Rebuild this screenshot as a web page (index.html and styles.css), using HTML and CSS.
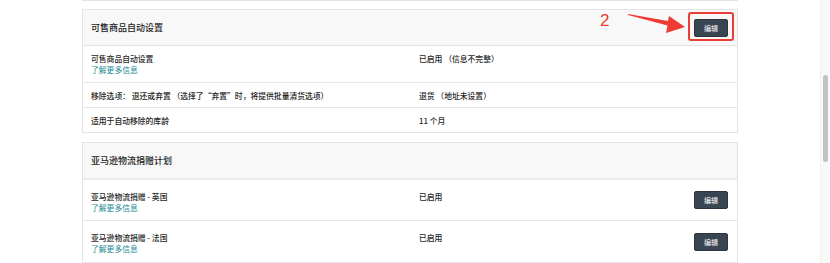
FILE: index.html
```html
<!DOCTYPE html>
<html lang="zh-CN">
<head>
<meta charset="utf-8">
<link rel="stylesheet" href="styles.css">
</head>
<body>
<div class="page">
  <div class="stub"></div>

  <section class="card">
    <div class="card-head">
      <span class="title">可售商品自动设置</span>
      <button class="btn btn-head">编辑</button>
    </div>
    <div class="row row-tall">
      <div class="label"><div>可售商品自动设置</div><a class="link">了解更多信息</a></div>
      <div class="value">已启用 （信息不完整）</div>
    </div>
    <div class="row">
      <div class="label">移除选项： 退还或弃置 （选择了“弃置”时，将提供批量清货选项）</div>
      <div class="value">退货 （地址未设置）</div>
    </div>
    <div class="row row-last">
      <div class="label">适用于自动移除的库龄</div>
      <div class="value">11 个月</div>
    </div>
  </section>

  <section class="card card2">
    <div class="card-head head2">
      <span class="title">亚马逊物流捐赠计划</span>
    </div>
    <div class="row row-don">
      <div class="label"><div>亚马逊物流捐赠 - 英国</div><a class="link">了解更多信息</a></div>
      <div class="value">已启用</div>
      <button class="btn">编辑</button>
    </div>
    <div class="row row-don">
      <div class="label"><div>亚马逊物流捐赠 - 法国</div><a class="link">了解更多信息</a></div>
      <div class="value">已启用</div>
      <button class="btn">编辑</button>
    </div>
  </section>
</div>

<div class="annot-num">2</div>
<svg class="annot-arrow" width="70" height="30" viewBox="0 0 70 30">
  <polygon points="0,2 40,9 41,4 57,15 38,21 39.5,13.5 0,3" fill="#ee3b33"/>
</svg>
<div class="annot-box"></div>

<div class="scrollbar"><div class="thumb"></div></div>
</body>
</html>
```

FILE: styles.css
```css
html, body {
  margin: 0;
  padding: 0;
  background: #fff;
}
body {
  width: 830px;
  height: 263px;
  overflow: hidden;
  position: relative;
  font-family: "Noto Sans CJK SC", "Noto Sans", sans-serif;
  color: #1f1f1f;
}
.page {
  width: 656px;
  margin-left: 82px;
}
.stub {
  height: 0;
  border-bottom: 1px solid #e4e4e4;
  margin-bottom: 8px;
}
.card {
  border: 1px solid #e4e4e4;
  background: #fff;
}
.card2 {
  margin-top: 9px;
}
.card-head {
  height: 35px;
  background: #f8f8f8;
  border-bottom: 1px solid #e4e4e4;
  display: flex;
  align-items: center;
  justify-content: space-between;
  padding: 0 9px 0 8px;
}
.head2 {
  border-bottom: 2px solid #ececec;
}
.title {
  font-size: 9px;
  font-weight: 500;
  color: #1a1a1a;
}
.row {
  display: flex;
  align-items: center;
  height: 24px;
  padding: 0 9px 0 8px;
  border-bottom: 1px solid #e6e6e6;
  font-size: 7.8px;
  line-height: 11px;
  font-weight: 500;
}
.row-tall {
  align-items: flex-start;
  padding-top: 7px;
  box-sizing: border-box;
  height: 37px;
}
.row-last {
  border-bottom: none;
}
.row-don {
  height: 40px;
  padding-top: 3px;
  box-sizing: border-box;
  height: 41px;
}
.row-don:last-child {
  border-bottom: none;
}
.row-don .value {
  padding-bottom: 11px;
}
.row-don .btn {
  margin-top: -3px;
}
.label {
  width: 328px;
  flex: none;
}
.value {
  flex: 1;
}
.link {
  color: #1b8a96;
  text-decoration: none;
  font-weight: 400;
}
.btn {
  width: 34px;
  height: 18px;
  border: 1px solid #2d3640;
  border-radius: 2px;
  background: #3a4552;
  color: #fff;
  font-family: "Noto Sans CJK SC", sans-serif;
  font-size: 7px;
  padding: 0;
  line-height: 16px;
}
.btn-head {
  margin-top: 1px;
}
.annot-num {
  position: absolute;
  left: 600px;
  top: 11px;
  font-family: "Liberation Sans", Arial, sans-serif;
  font-size: 17px;
  line-height: 20px;
  color: #ee3b33;
}
.annot-arrow {
  position: absolute;
  left: 628px;
  top: 12px;
}
.annot-box {
  position: absolute;
  left: 688px;
  top: 12px;
  width: 42px;
  height: 25px;
  border: 2px solid #ea3d36;
  border-radius: 3px;
}
.scrollbar {
  position: absolute;
  left: 820px;
  top: 0;
  width: 9px;
  height: 263px;
  background: #f9f9f9;
  border-left: 1px solid #efefef;
  box-sizing: border-box;
}
.thumb {
  position: absolute;
  left: 2px;
  top: 75px;
  width: 5px;
  height: 87px;
  border-radius: 3px;
  background: #c2c2c2;
}
```
